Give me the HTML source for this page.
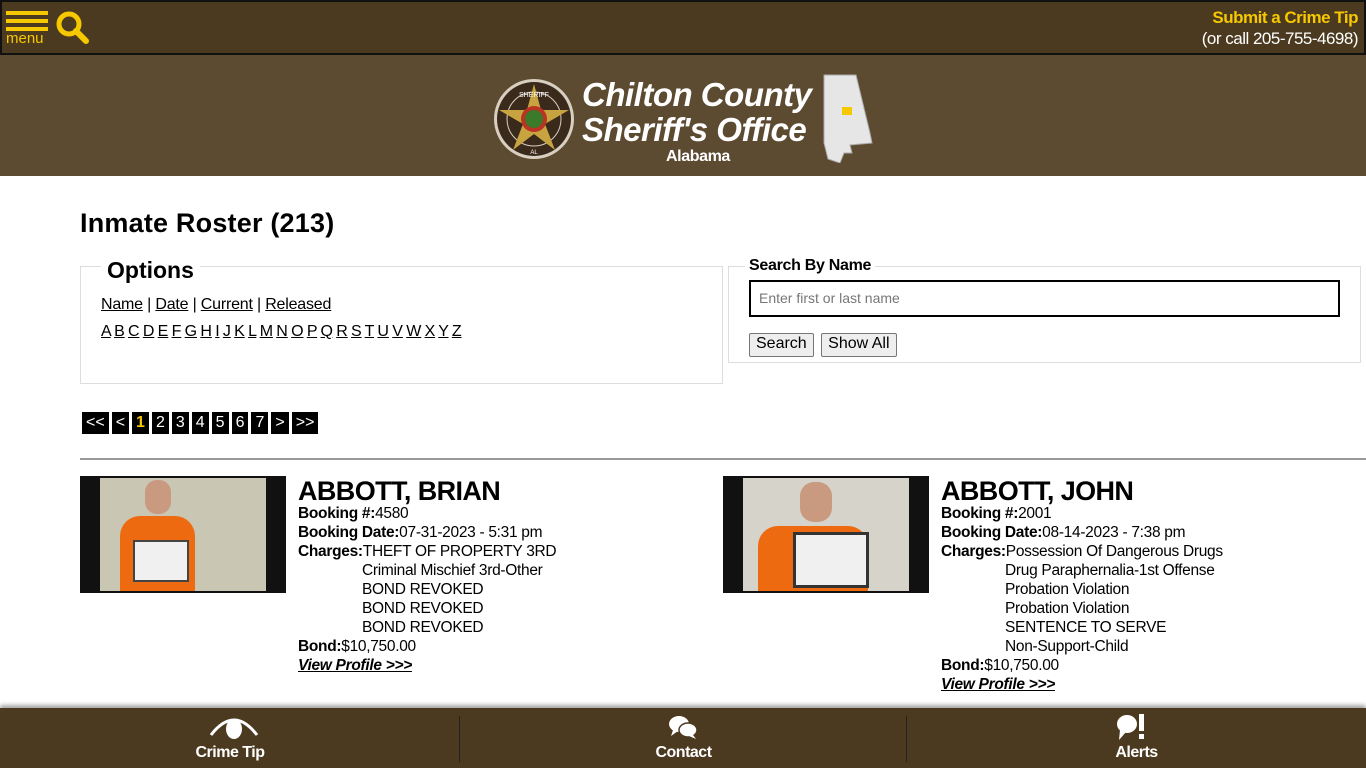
<!DOCTYPE html>
<html><head><meta charset="utf-8"><style>
*{box-sizing:border-box;margin:0;padding:0}
body{width:1366px;height:768px;overflow:hidden;background:#fff;font-family:"Liberation Sans",Arial,sans-serif;color:#000;position:relative}
.top{position:absolute;left:0;top:0;width:1366px;height:55px;background:#4b3a1f;border:2px solid #111}
.hdr{position:absolute;left:0;top:55px;width:1366px;height:121px;background:#5c4a31}
.foot{position:absolute;left:0;top:708px;width:1366px;height:60px;background:#4b3a1f;box-shadow:0 -3px 4px rgba(0,0,0,.35)}
.fi{position:absolute;top:0;height:60px;text-align:center;color:#fff;font-weight:bold;font-size:16px;letter-spacing:-0.5px}
.fi span{position:absolute;left:0;right:0;top:36px}
.sep{position:absolute;top:8px;width:1px;height:46px;background:#222}
a{color:#000}
.pg{display:inline-block;background:#000;color:#fff;font-size:16px;height:22px;line-height:22px;padding:0 4px;margin-right:3px;vertical-align:top}
.card{position:absolute;top:476px}
.photo{position:absolute;left:0;top:0;width:206px;height:117px;background:#111}
.info{position:absolute;top:0;font-size:15.5px;line-height:19px;white-space:nowrap;letter-spacing:-0.3px}
.info h2{font-size:27px;line-height:30px;font-weight:bold;margin-bottom:-2px;letter-spacing:-0.6px}
.ch{padding-left:64px}
.btn{display:inline-block;border:1px solid #777;background:#eee;border-radius:2px;font-size:16px;padding:1px 6px;height:24px}
</style></head><body>
<div class="top">
  <div style="position:absolute;left:4px;top:9px;width:42px">
    <div style="height:4px;background:#f5c800;margin-bottom:4px"></div>
    <div style="height:4px;background:#f5c800;margin-bottom:4px"></div>
    <div style="height:4px;background:#f5c800"></div>
    <div style="color:#f5c800;font-size:15px;line-height:16px;margin-top:0">menu</div>
  </div>
  <svg style="position:absolute;left:54px;top:9px" width="34" height="34" viewBox="0 0 34 34"><circle cx="13" cy="13" r="10" fill="none" stroke="#f5c800" stroke-width="5"/><line x1="20" y1="20" x2="30" y2="30" stroke="#f5c800" stroke-width="6" stroke-linecap="round"/></svg>
  <div style="position:absolute;right:6px;top:5px;text-align:right;font-weight:bold;font-size:17px;line-height:21px;letter-spacing:-0.5px">
    <div style="color:#f5c800">Submit a Crime Tip</div>
    <div style="color:#fff;font-weight:normal">(or call 205-755-4698)</div>
  </div>
</div>
<div class="hdr">
  <svg style="position:absolute;left:493px;top:23px" width="82" height="82" viewBox="0 0 82 82"><circle cx="41" cy="41" r="40" fill="#d8cfc0"/><circle cx="41" cy="41" r="37" fill="#3a2a1c"/><circle cx="41" cy="41" r="27" fill="none" stroke="#d8cfc0" stroke-width="1"/><polygon points="41,6 48,32 76,32 52,46 62,72 41,56 20,72 30,46 6,32 34,32" fill="#c8a440"/><circle cx="41" cy="41" r="13" fill="#b32"/><circle cx="41" cy="41" r="9" fill="#3a7a2a"/><text x="41" y="19" font-size="7" fill="#fff" text-anchor="middle" font-family="Liberation Sans">SHERIFF</text><text x="41" y="76" font-size="6" fill="#fff" text-anchor="middle" font-family="Liberation Sans">AL</text></svg>
  <div style="position:absolute;left:582px;top:22px;color:#fff;font-weight:bold;font-style:italic;font-size:33px;line-height:35px;letter-spacing:-0.5px">Chilton County<br>Sheriff's Office</div>
  <div style="position:absolute;left:666px;top:93px;color:#fff;font-weight:bold;font-size:16px;letter-spacing:-0.4px">Alabama</div>
  <svg style="position:absolute;left:820px;top:18px" width="58" height="90" viewBox="0 0 58 90"><polygon points="4,2 36,2 50,60 52,70 30,72 32,80 24,80 20,90 8,86 4,70" fill="#e6e6e6" stroke="#aaa"/><rect x="22" y="34" width="10" height="8" fill="#f5c800"/></svg>
</div>

<div style="position:absolute;left:80px;top:208px;font-size:27px;font-weight:bold;letter-spacing:0.2px">Inmate Roster (213)</div>

<div style="position:absolute;left:80px;top:266px;width:643px;height:118px;border:1px solid #ddd"></div>
<div style="position:absolute;left:101px;top:257px;background:#fff;padding:0 6px;font-size:23px;font-weight:bold">Options</div>
<div style="position:absolute;left:101px;top:295px;font-size:16px;line-height:19px;letter-spacing:-0.2px"><a href="#">Name</a> | <a href="#">Date</a> | <a href="#">Current</a> | <a href="#">Released</a></div>
<div style="position:absolute;left:101px;top:322px;font-size:16px;line-height:19px;word-spacing:-1px;letter-spacing:-0.1px"><a href="#">A</a> <a href="#">B</a> <a href="#">C</a> <a href="#">D</a> <a href="#">E</a> <a href="#">F</a> <a href="#">G</a> <a href="#">H</a> <a href="#">I</a> <a href="#">J</a> <a href="#">K</a> <a href="#">L</a> <a href="#">M</a> <a href="#">N</a> <a href="#">O</a> <a href="#">P</a> <a href="#">Q</a> <a href="#">R</a> <a href="#">S</a> <a href="#">T</a> <a href="#">U</a> <a href="#">V</a> <a href="#">W</a> <a href="#">X</a> <a href="#">Y</a> <a href="#">Z</a></div>

<div style="position:absolute;left:728px;top:266px;width:633px;height:97px;border:1px solid #ddd"></div>
<div style="position:absolute;left:745px;top:257px;background:#fff;padding:0 4px;font-size:16px;font-weight:bold;letter-spacing:-0.3px">Search By Name</div>
<div style="position:absolute;left:749px;top:280px;width:591px;height:37px;border:2px solid #000;font-size:14px;color:#777;padding:8px 8px">Enter first or last name</div>
<div style="position:absolute;left:749px;top:333px"><span class="btn">Search</span> <span class="btn" style="margin-left:3px">Show All</span></div>

<div style="position:absolute;left:82px;top:412px;white-space:nowrap"><span class="pg">&lt;&lt;</span><span class="pg">&lt;</span><span class="pg" style="color:#f5c800;font-weight:bold">1</span><span class="pg">2</span><span class="pg">3</span><span class="pg">4</span><span class="pg">5</span><span class="pg">6</span><span class="pg">7</span><span class="pg">&gt;</span><span class="pg">&gt;&gt;</span></div>
<div style="position:absolute;left:80px;top:458px;width:1286px;height:2px;background:#999"></div>

<div class="card" style="left:80px">
  <div class="photo"><div style="position:absolute;left:20px;top:2px;width:166px;height:113px;background:#c9c6b4"></div><div style="position:absolute;left:40px;top:40px;width:75px;height:75px;background:#ee6a10;border-radius:20px 20px 0 0"></div><div style="position:absolute;left:65px;top:4px;width:26px;height:34px;background:#c99a80;border-radius:12px"></div><div style="position:absolute;left:53px;top:64px;width:56px;height:42px;background:#f0f0f0;border:2px solid #444"></div></div>
  <div class="info" style="left:218px"><h2>ABBOTT, BRIAN</h2><b>Booking #:</b>4580<br><b>Booking Date:</b>07-31-2023 - 5:31 pm<br><b>Charges:</b>THEFT OF PROPERTY 3RD<br><div class="ch">Criminal Mischief 3rd-Other<br>BOND REVOKED<br>BOND REVOKED<br>BOND REVOKED</div><b>Bond:</b>$10,750.00<br><a href="#" style="font-weight:bold;font-style:italic">View Profile &gt;&gt;&gt;</a></div>
</div>
<div class="card" style="left:723px">
  <div class="photo"><div style="position:absolute;left:20px;top:2px;width:166px;height:113px;background:#d6d4ca"></div><div style="position:absolute;left:35px;top:50px;width:110px;height:65px;background:#ee6a10;border-radius:20px 20px 0 0"></div><div style="position:absolute;left:77px;top:6px;width:32px;height:40px;background:#c99a80;border-radius:14px"></div><div style="position:absolute;left:70px;top:56px;width:76px;height:56px;background:#f0f0f0;border:3px solid #333"></div></div>
  <div class="info" style="left:218px"><h2>ABBOTT, JOHN</h2><b>Booking #:</b>2001<br><b>Booking Date:</b>08-14-2023 - 7:38 pm<br><b>Charges:</b>Possession Of Dangerous Drugs<br><div class="ch">Drug Paraphernalia-1st Offense<br>Probation Violation<br>Probation Violation<br>SENTENCE TO SERVE<br>Non-Support-Child</div><b>Bond:</b>$10,750.00<br><a href="#" style="font-weight:bold;font-style:italic">View Profile &gt;&gt;&gt;</a></div>
</div>

<div class="foot">
  <div class="fi" style="left:0;width:460px"><svg style="position:absolute;left:209px;top:5px" width="50" height="26" viewBox="0 0 50 26"><path d="M2,22 Q25,-8 48,22" fill="none" stroke="#fff" stroke-width="3"/><ellipse cx="25" cy="16" rx="8" ry="10" fill="#fff"/></svg><span>Crime Tip</span></div>
  <div class="sep" style="left:459px"></div>
  <div class="fi" style="left:460px;width:447px"><svg style="position:absolute;left:207px;top:6px" width="32" height="26" viewBox="0 0 32 26"><ellipse cx="12" cy="10" rx="10" ry="8" fill="#fff"/><ellipse cx="21" cy="16" rx="9" ry="7" fill="#fff" stroke="#4b3a1f" stroke-width="1.5"/><polygon points="6,16 4,22 11,17" fill="#fff"/><polygon points="26,21 29,25 22,22" fill="#fff"/></svg><span>Contact</span></div>
  <div class="sep" style="left:906px"></div>
  <div class="fi" style="left:907px;width:459px"><svg style="position:absolute;left:209px;top:5px" width="32" height="28" viewBox="0 0 32 28"><ellipse cx="11" cy="11" rx="10" ry="9" fill="#fff"/><polygon points="4,17 3,27 10,19" fill="#fff"/><rect x="23" y="1" width="5" height="17" fill="#fff"/><rect x="23" y="21" width="5" height="5" fill="#fff"/></svg><span>Alerts</span></div>
</div>
</body></html>
